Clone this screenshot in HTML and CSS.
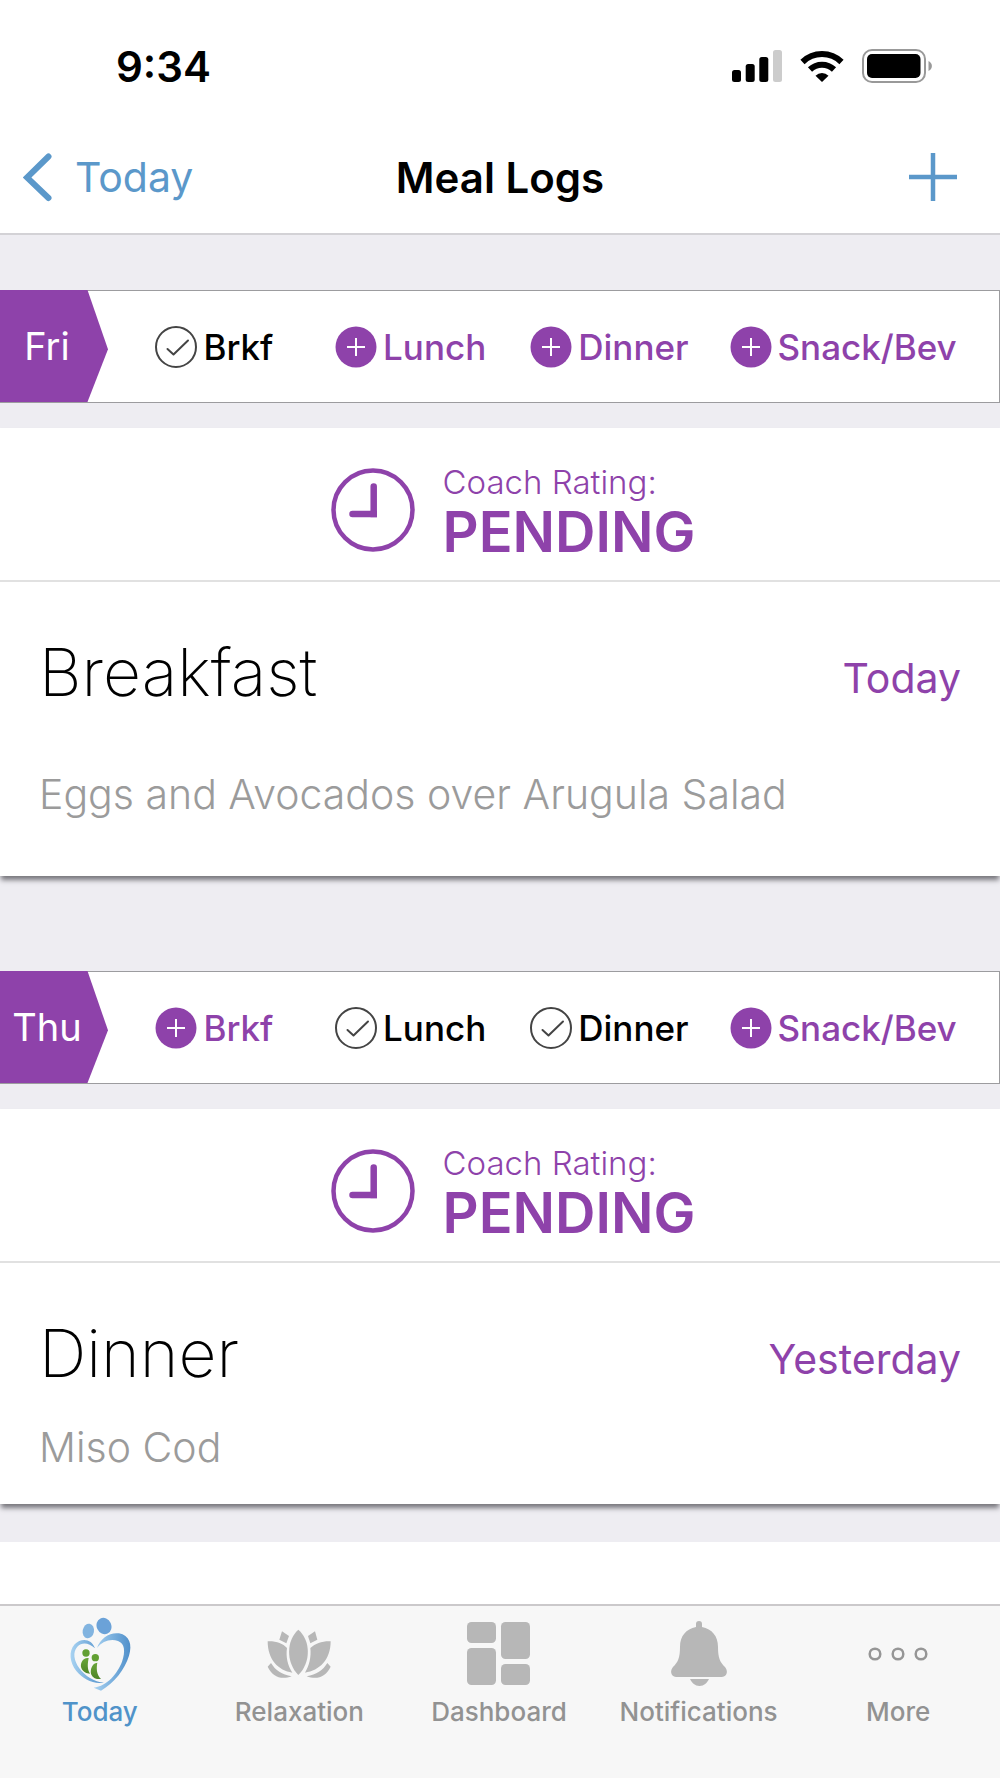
FILE: index.html
```html
<!DOCTYPE html>
<html lang="en">
<head>
<meta charset="utf-8">
<meta name="viewport" content="width=device-width, initial-scale=1">
<title>Meal Logs</title>
<link rel="stylesheet" href="styles.css">
</head>
<body>
<svg class="sprite" aria-hidden="true">
  <symbol id="plus" viewBox="0 0 42 42">
    <circle cx="21" cy="21" r="20.5" fill="#8e42aa"/>
    <path d="M12 21h18M21 12v18" stroke="#fff" stroke-width="2"/>
  </symbol>
  <symbol id="check" viewBox="0 0 42 42">
    <circle cx="21" cy="21" r="20" fill="none" stroke="#444" stroke-width="2"/>
    <path d="M12.500 23l6 5.500L33 14.500" fill="none" stroke="#444" stroke-width="2" stroke-linecap="round" stroke-linejoin="round"/>
  </symbol>
  <symbol id="clock" viewBox="0 0 84 84">
    <circle cx="42" cy="42" r="39.500" fill="none" stroke="#8e42aa" stroke-width="4.500"/>
    <path d="M42.700 18.500V46H21.500" fill="none" stroke="#8e42aa" stroke-width="6.500" stroke-linecap="round"/>
    <path d="M39.500 42.800h6.500v6.400h-6.500z" fill="#8e42aa"/>
  </symbol>
</svg>

<header class="header">
  <div class="status">
    <span class="time">9:34</span>
    <div class="status-icons">
      <svg width="50" height="32" viewBox="0 0 50 32" aria-label="Signal">
        <rect x="0" y="20" width="9" height="12" rx="2.500"/>
        <rect x="13.700" y="14" width="9" height="18" rx="2.500"/>
        <rect x="27.300" y="7" width="9" height="25" rx="2.500"/>
        <rect x="41" y="0" width="9" height="32" rx="2.500" fill="#ccc"/>
      </svg>
      <svg width="44" height="32" viewBox="0 0 44 32" aria-label="Wi-Fi">
        <path d="M2.500 12a28 28 0 0 1 39 0" fill="none" stroke="#000" stroke-width="6"/>
        <path d="M10 19.500a17.500 17.500 0 0 1 24 0" fill="none" stroke="#000" stroke-width="6"/>
        <path d="M22 32l-6.500-6.300a9.300 9.300 0 0 1 13 0z"/>
      </svg>
      <svg width="70" height="34" viewBox="0 0 70 34" aria-label="Battery">
        <rect x="1" y="1" width="62" height="32" rx="9" fill="none" stroke="#999" stroke-width="2"/>
        <rect x="5" y="5" width="53.500" height="24" rx="5"/>
        <path d="M66.500 12v10c4.500-2 4.500-8 0-10z" fill="#999"/>
      </svg>
    </div>
  </div>
  <nav class="nav">
    <a class="back" href="#today">
      <svg width="30" height="50" viewBox="0 0 30 50" aria-hidden="true"><path d="M25.500 4.500L4 25.500l21.500 20.500" fill="none" stroke="#5b98ca" stroke-width="6" stroke-linecap="round" stroke-linejoin="miter"/></svg>
      Today
    </a>
    <h1 class="title">Meal Logs</h1>
    <button class="add" type="button" aria-label="Add meal">
      <svg width="48" height="48" viewBox="0 0 48 48" aria-hidden="true"><path d="M0 24h48M24 0v48" stroke="#5b98ca" stroke-width="4.500"/></svg>
    </button>
  </nav>
</header>

<main class="log">
  <section class="day">
    <div class="strip">
      <h2 class="day-name">Fri</h2>
      <div class="slots">
        <button class="slot done" type="button"><svg class="dot"><use href="#check"/></svg>Brkf</button>
        <button class="slot" type="button"><svg class="dot"><use href="#plus"/></svg>Lunch</button>
        <button class="slot" type="button"><svg class="dot"><use href="#plus"/></svg>Dinner</button>
        <button class="slot" type="button"><svg class="dot"><use href="#plus"/></svg>Snack/Bev</button>
      </div>
    </div>
    <article class="card">
      <div class="rating">
        <svg class="clock"><use href="#clock"/></svg>
        <p class="rating-text"><span class="rating-label">Coach Rating:</span><strong class="rating-value">PENDING</strong></p>
      </div>
      <div class="meal">
        <div class="meal-head"><h3 class="meal-name">Breakfast</h3><span class="meal-date">Today</span></div>
        <p class="meal-text roomy">Eggs and Avocados over Arugula Salad</p>
      </div>
    </article>
  </section>

  <section class="day">
    <div class="strip">
      <h2 class="day-name">Thu</h2>
      <div class="slots">
        <button class="slot" type="button"><svg class="dot"><use href="#plus"/></svg>Brkf</button>
        <button class="slot done" type="button"><svg class="dot"><use href="#check"/></svg>Lunch</button>
        <button class="slot done" type="button"><svg class="dot"><use href="#check"/></svg>Dinner</button>
        <button class="slot" type="button"><svg class="dot"><use href="#plus"/></svg>Snack/Bev</button>
      </div>
    </div>
    <article class="card">
      <div class="rating">
        <svg class="clock"><use href="#clock"/></svg>
        <p class="rating-text"><span class="rating-label">Coach Rating:</span><strong class="rating-value">PENDING</strong></p>
      </div>
      <div class="meal">
        <div class="meal-head"><h3 class="meal-name">Dinner</h3><span class="meal-date">Yesterday</span></div>
        <p class="meal-text">Miso Cod</p>
      </div>
    </article>
  </section>
  <div class="next-card"></div>
</main>

<nav class="tabs">
  <a class="tab active" href="#today">
    <svg width="66" height="76" viewBox="198 75 198 228" aria-hidden="true">
      <defs>
        <linearGradient id="heart" x1="0" x2="1"><stop offset="0" stop-color="#a9d3f2"/><stop offset="1" stop-color="#4f8fca"/></linearGradient>
        <linearGradient id="leaf" x1="0" y1="0" x2="0" y2="1"><stop offset="0" stop-color="#6aa63a"/><stop offset="1" stop-color="#4d8426"/></linearGradient>
      </defs>
      <ellipse cx="262" cy="120" rx="17" ry="22" fill="#82b4e0" transform="rotate(10 262 120)"/>
      <ellipse cx="309" cy="105" rx="22" ry="25" fill="#6ba2d8" transform="rotate(-25 309 105)"/>
      <path d="M282 172C272 142 240 140 221 160C202 181 206 215 226 240C246 264 274 280 309 275C280 274 251 254 235 232C219 209 214 184 229 167C243 153 263 155 282 172Z" fill="url(#heart)"/>
      <path d="M288 171C298 141 327 123 354 127C385 132 395 161 384 194C371 236 339 276 300 299L278 290C319 285 350 246 363 212C374 181 371 157 351 150C328 142 304 151 288 171Z" fill="url(#heart)"/>
      <circle cx="255" cy="186" r="11" fill="#62a033"/>
      <circle cx="283" cy="200" r="11" fill="#62a033"/>
      <path d="M263 201C246 198 236 217 241 231C246 243 257 248 267 248C258 234 260 217 263 201Z" fill="url(#leaf)"/>
      <path d="M289 215C273 216 266 237 271 251C276 262 288 265 300 264C286 249 286 232 289 215Z" fill="url(#leaf)"/>
    </svg>
    Today
  </a>
  <a class="tab" href="#relaxation">
    <svg width="66" height="76" viewBox="799 78 198 228" fill="#b7b7b7" aria-hidden="true">
      <path d="M896 119C860 150 858 217 896 255C935 217 933 150 896 119Z"/>
      <path d="M804 154C830 153 849 160 862 174C858 201 864 226 878 248C836 242 804 209 804 154Z"/>
      <path d="M993 154C967 153 948 160 932 174C935 201 929 226 916 248C960 242 993 209 993 154Z"/>
      <path d="M847 124L868 138L860 160L839 149Z"/><path d="M946 124L925 138L932 160L953 149Z"/>
      <path d="M814 219C827 241 847 254 876 259C843 271 818 259 804 230Z"/>
      <path d="M983 219C970 241 950 254 921 259C954 271 979 259 993 230Z"/>
    </svg>
    Relaxation
  </a>
  <a class="tab" href="#dashboard">
    <svg width="64" height="76" viewBox="0 0 64 76" fill="#b7b7b7" aria-hidden="true">
      <rect x="0" y="6" width="29" height="21" rx="4.500"/><rect x="34" y="6" width="29" height="37" rx="4.500"/>
      <rect x="0" y="32" width="29" height="37" rx="4.500"/><rect x="34" y="48" width="29" height="21" rx="4.500"/>
    </svg>
    Dashboard
  </a>
  <a class="tab" href="#notifications">
    <svg width="58" height="76" viewBox="0 0 58 76" fill="#b7b7b7" aria-hidden="true">
      <path d="M26 11V8a3 3 0 0 1 6 0v3C42 13 48 20 48 31C48 42 50 46 55 51C59 56 56 61 52 61H6C2 61-1 56 3 51C8 46 10 42 10 31C10 20 16 13 26 11Z"/>
      <path d="M20 63H39C37 67 34 70 29.500 70C25 70 22 67 20 63Z"/>
    </svg>
    Notifications
  </a>
  <a class="tab" href="#more">
    <svg width="62" height="76" viewBox="0 0 62 76" fill="none" stroke="#969696" stroke-width="2.500" aria-hidden="true">
      <circle cx="8" cy="38" r="5.300"/><circle cx="31" cy="38" r="5.300"/><circle cx="54" cy="38" r="5.300"/>
    </svg>
    More
  </a>
</nav>
</body>
</html>
```
FILE: styles.css
```css
* { box-sizing: border-box; }

body {
  margin: 0;
  min-height: 100vh;
  display: flex;
  flex-direction: column;
  background: #eeedf2;
  color: #000;
  font-family: Inter, "Liberation Sans", sans-serif;
  font-size: 41px;
}

h1, h2, h3, p { margin: 0; font-weight: inherit; }
button { padding: 0; border: 0; background: none; color: inherit; font: inherit; cursor: pointer; }
a { color: inherit; text-decoration: none; }
svg { display: block; flex: none; }
.sprite { position: absolute; width: 0; height: 0; }

/* Header */
.header { background: #fff; border-bottom: 2px solid #d3d2d6; }
.status {
  display: flex;
  align-items: center;
  justify-content: space-between;
  height: 132px;
  padding: 0 68px 0 116px;
}
.time { font-size: 42px; font-weight: 600; }
.status-icons { display: flex; align-items: center; gap: 18px; }
.nav {
  display: grid;
  grid-template-columns: 1fr auto 1fr;
  align-items: center;
  height: 90px;
  margin-bottom: 11px;
  padding: 0 23px;
}
.back { display: flex; align-items: center; gap: 22px; color: #5b98ca; }
.title { font-size: 42px; font-weight: 600; }
.add { justify-self: end; margin-right: 20px; }

/* Day strip */
.log { flex: 1; display: flex; flex-direction: column; }
.day { padding-top: 55px; }
.day + .day { padding-top: 95px; }
.strip {
  display: flex;
  height: 113px;
  background: #fff;
  border: 1px solid #9c9c9f;
  border-left: 0;
}
.day-name {
  display: flex;
  align-items: center;
  justify-content: center;
  width: 108px;
  margin: -1px 0 0;
  padding-right: 14px;
  background: #8e42aa;
  clip-path: polygon(0 0, 81% 0, 100% 53%, 81% 100%, 0 100%);
  color: #fff;
  font-size: 38px;
}
.slots {
  flex: 1;
  display: grid;
  grid-template-columns: 213fr 180fr 218fr 250fr;
  align-items: center;
  justify-items: center;
  padding-right: 31px;
}
.slot { display: flex; align-items: center; gap: 6px; color: #8e42aa; font-size: 35px; font-weight: 500; }
.done { color: #000; }
.dot { width: 42px; height: 42px; }

/* Meal card */
.card { margin-top: 25px; background: #fff; box-shadow: 0 5px 5px -1px #77767c; }
.rating {
  display: flex;
  align-items: center;
  justify-content: center;
  gap: 28px;
  height: 154px;
  padding: 12px 0 0 26px;
  border-bottom: 2px solid #e1e1e1;
  color: #8e42aa;
}
.clock { width: 84px; height: 84px; }
.rating-text { display: grid; padding-top: 3px; }
.rating-label { font-size: 33px; font-weight: 300; line-height: 40px; }
.rating-value { font-size: 56px; font-weight: 600; line-height: 60px; }
.meal { padding: 47px 39px 31px; }
.meal-head { display: flex; align-items: flex-end; justify-content: space-between; }
.meal-name { font-size: 66px; font-weight: 200; line-height: 86px; }
.meal-date { color: #8e42aa; line-height: 74px; }
.meal-text { padding-top: 25px; color: #9b9b9b; font-weight: 300; line-height: 52px; }
.roomy { padding: 53px 0 25px; }
.next-card { flex: 1; min-height: 60px; margin-top: 38px; background: #fff; }

/* Tab bar */
.tabs {
  display: grid;
  grid-template-columns: repeat(5, 1fr);
  padding: 10px 2px 50px 0;
  background: #f7f7f7;
  border-top: 2px solid #cbc9cb;
}
.tab {
  display: flex;
  flex-direction: column;
  align-items: center;
  gap: 4px;
  color: #929292;
  font-size: 26px;
  font-weight: 500;
  line-height: 32px;
}
.active { color: #5093c9; }
```
